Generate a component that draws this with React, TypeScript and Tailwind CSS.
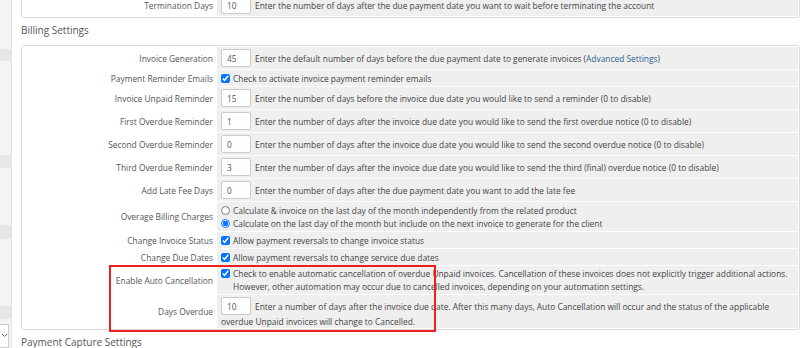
import React from 'react';

type FieldProps = {
  label: string;
  children: React.ReactNode;
  cell?: string;
};

const Field = ({ label, children, cell = '' }: FieldProps) => (
  <>
    <div className="flex items-center justify-end pr-[3px] text-right text-[#555]">{label}</div>
    <div className={`bg-[#efefef] pl-[4px] text-[#444] ${cell}`}>{children}</div>
  </>
);

const NumInput = ({ value }: { value: string }) => (
  <input
    readOnly
    value={value}
    className="w-[30px] h-[18px] shrink-0 border border-[#ccc] rounded-[2px] bg-white px-[5px] text-[#555] outline-none"
  />
);

const Check = () => (
  <input type="checkbox" defaultChecked className="w-[9px] h-[9px] m-0 shrink-0" />
);

const NumberRow = ({ label, value, text }: { label: string; value: string; text: React.ReactNode }) => (
  <Field label={label} cell="flex items-center gap-[4px] h-[22px]">
    <NumInput value={value} />
    <span>{text}</span>
  </Field>
);

const CheckRow = ({ label, text }: { label: string; text: string }) => (
  <Field label={label} cell="flex items-center gap-[3px] h-[16px]">
    <Check />
    <span>{text}</span>
  </Field>
);

const Sidebar = () => (
  <div className="w-[12px] shrink-0 flex flex-col bg-[#f4f4f4] border-r border-[#e2e2e2]">
    <div className="h-[50px]" />
    <div className="h-[12px] bg-[#e7e7e7]" />
    <div className="h-[95px]" />
    <div className="h-[13px] bg-[#e7e7e7]" />
    <div className="h-[58px]" />
    <div className="h-[14px] bg-[#e7e7e7]" />
    <div className="h-[68px]" />
    <div className="h-[13px] bg-[#e7e7e7]" />
    <div className="h-[5px]" />
    <div className="h-[24px] mr-[2px] bg-white border border-l-0 border-[#ccc] flex items-start pt-[8px] pl-[1px]">
      <svg width="7" height="5" viewBox="0 0 7 5" fill="none">
        <path d="M1 1l2.5 2.5L6 1" stroke="#666" strokeWidth="1" />
      </svg>
    </div>
  </div>
);

export default function App() {
  return (
    <div className="flex h-[348px] w-[800px] overflow-hidden bg-white font-['Open_Sans',sans-serif] text-[8.4px] leading-[13px]">
      <Sidebar />
      <div className="flex-1 min-w-0">
        <div className="-mt-[8px] ml-[9px] border border-[#dcdcdc] rounded-[3px] p-[1px]">
          <div className="grid grid-cols-[193px_1fr] gap-[1px]">
            <NumberRow
              label="Termination Days"
              value="10"
              text="Enter the number of days after the due payment date you want to wait before terminating the account"
            />
          </div>
        </div>

        <h2 className="ml-[9px] mt-[5px] mb-[8px] text-[10px] leading-[14px] text-[#555] font-normal">Billing Settings</h2>

        <div className="relative ml-[9px] border border-[#dcdcdc] rounded-[3px] p-[1px]">
          <div className="grid grid-cols-[193px_1fr] gap-[1px]">
            <NumberRow
              label="Invoice Generation"
              value="45"
              text={
                <>
                  Enter the default number of days before the due payment date to generate invoices (
                  <span className="text-[#2c6392]">Advanced Settings</span>)
                </>
              }
            />
            <CheckRow label="Payment Reminder Emails" text="Check to activate invoice payment reminder emails" />
            <NumberRow
              label="Invoice Unpaid Reminder"
              value="15"
              text="Enter the number of days before the invoice due date you would like to send a reminder (0 to disable)"
            />
            <NumberRow
              label="First Overdue Reminder"
              value="1"
              text="Enter the number of days after the invoice due date you would like to send the first overdue notice (0 to disable)"
            />
            <NumberRow
              label="Second Overdue Reminder"
              value="0"
              text="Enter the number of days after the invoice due date you would like to send the second overdue notice (0 to disable)"
            />
            <NumberRow
              label="Third Overdue Reminder"
              value="3"
              text="Enter the number of days after the invoice due date you would like to send the third (final) overdue notice (0 to disable)"
            />
            <NumberRow
              label="Add Late Fee Days"
              value="0"
              text="Enter the number of days after the due payment date you want to add the late fee"
            />
            <Field label="Overage Billing Charges" cell="flex flex-col justify-center py-[1.5px]">
              <label className="flex items-center gap-[3px] h-[13px]">
                <input type="radio" name="overage" className="w-[9px] h-[9px] m-0" />
                <span>Calculate &amp; invoice on the last day of the month independently from the related product</span>
              </label>
              <label className="flex items-center gap-[3px] h-[13px]">
                <input type="radio" name="overage" defaultChecked className="w-[9px] h-[9px] m-0" />
                <span>Calculate on the last day of the month but include on the next invoice to generate for the client</span>
              </label>
            </Field>
            <CheckRow label="Change Invoice Status" text="Allow payment reversals to change invoice status" />
            <CheckRow label="Change Due Dates" text="Allow payment reversals to change service due dates" />
            <Field label="Enable Auto Cancellation" cell="flex items-start gap-[3px] py-[1px]">
              <span className="h-[13px] flex items-center">
                <Check />
              </span>
              <span className="whitespace-nowrap">
                Check to enable automatic cancellation of overdue Unpaid invoices. Cancellation of these invoices does not explicitly trigger additional actions.
                <br />
                However, other automation may occur due to cancelled invoices, depending on your automation settings.
              </span>
            </Field>
            <Field label="Days Overdue" cell="pt-[2px]">
              <div className="flex items-center gap-[4px] h-[18px]">
                <NumInput value="10" />
                <span className="whitespace-nowrap">
                  Enter a number of days after the invoice due date. After this many days, Auto Cancellation will occur and the status of the applicable
                </span>
              </div>
              <div className="h-[13px]">overdue Unpaid invoices will change to Cancelled.</div>
            </Field>
          </div>
          <div className="absolute left-[87px] top-[219px] w-[327px] h-[67px] border-2 border-[#ee1f1f] pointer-events-none" />
        </div>

        <h2 className="ml-[9px] mt-[5px] text-[10px] leading-[14px] text-[#555] font-normal">Payment Capture Settings</h2>
      </div>
    </div>
  );
}
